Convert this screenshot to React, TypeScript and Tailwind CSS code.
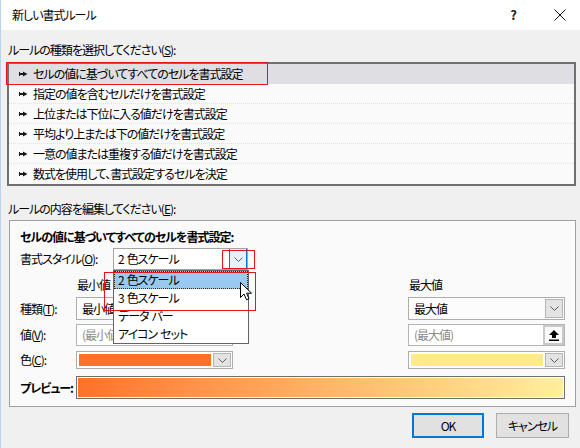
import React from "react"

const font = {
  fontFamily: '"Noto Sans CJK JP", "Noto Sans", sans-serif',
  fontFeatureSettings: '"palt"',
}

const rules = [
  "セルの値に基づいてすべてのセルを書式設定",
  "指定の値を含むセルだけを書式設定",
  "上位または下位に入る値だけを書式設定",
  "平均より上または下の値だけを書式設定",
  "一意の値または重複する値だけを書式設定",
  "数式を使用して、書式設定するセルを決定",
]

// the dialog font packs tight, but word gaps stay visible
const sp = "\u2004"

function Pointer() {
  return (
    <svg width="9" height="6" viewBox="0 0 9 6" className="shrink-0">
      <rect x="0" y="1" width="1" height="4" fill="#1a1a1a" />
      <rect x="0" y="2" width="4" height="2" fill="#1a1a1a" />
      <path d="M4 0.5 L8.5 3 L4 5.5 Z" fill="#1a1a1a" />
    </svg>
  )
}

function Chevron() {
  return (
    <svg width="9" height="5" viewBox="0 0 9 5">
      <polyline points="0.5,0.5 4.5,4.5 8.5,0.5" fill="none" stroke="#5a5a5a" strokeWidth="1" />
    </svg>
  )
}

function DropBtn() {
  return (
    <div className="my-[1px] mr-[1px] flex w-[18px] items-center justify-center border border-[#b5b5b5] bg-[#e3e3e3]">
      <Chevron />
    </div>
  )
}

function Cursor() {
  return (
    <svg width="13" height="19" viewBox="0 0 13 19">
      <path
        d="M0.5 0.5 L0.5 15.5 L4 12 L6.5 17.8 L9 16.8 L6.6 11.2 L11.5 11.2 Z"
        fill="#ffffff"
        stroke="#000000"
        strokeWidth="1"
      />
    </svg>
  )
}

function UploadIcon() {
  return (
    <svg width="10" height="11" viewBox="0 0 10 11">
      <path d="M5 0 L10 5 H7 V8 H3 V5 H0 Z" fill="#000" />
      <rect x="0" y="9.5" width="10" height="1.5" fill="#000" />
    </svg>
  )
}

export default function App() {
  return (
    <div
      style={font}
      className="relative flex h-[448px] w-[580px] flex-col overflow-hidden border-l border-[#b9d1ea] bg-[#f0f0f0] text-[12px] leading-[16px] tracking-[-1px] text-black"
    >
      {/* title bar */}
      <div className="flex h-[30px] shrink-0 items-center bg-white pl-[11px]">
        <span>新しい書式ルール</span>
        <span className="ml-auto mr-[38px] text-[13px] font-bold text-[#222]">?</span>
        <svg width="12" height="12" viewBox="0 0 12 12" className="mr-[14px]">
          <path d="M0.5 0.5 L11.5 11.5 M11.5 0.5 L0.5 11.5" stroke="#111" strokeWidth="1" />
        </svg>
      </div>

      <div className="flex flex-col pl-[6px] pr-[4px]">
        <div className="mt-[12px] pl-[1px]">
          ルールの種類を選択してください(<span className="underline">S</span>):
        </div>

        {/* rule type list */}
        <div className="relative mt-[4px] border-2 border-[#707070] bg-[#fafafa]">
          {rules.map((r, i) => (
            <div
              key={r}
              className={
                "flex h-[20px] items-center gap-[5px] pl-[10px] " +
                (i === 0 ? "bg-[#dedee3] " : "") +
                (i < rules.length - 1 ? "border-b border-dotted border-[#e2e2e2]" : "")
              }
            >
              <Pointer />
              <span>{r}</span>
            </div>
          ))}
          <div className="absolute left-[-3px] top-[-2px] h-[23px] w-[262px] border border-[#e8141b]" />
        </div>

        <div className="mt-[15px] pl-[1px]">
          ルールの内容を編集してください(<span className="underline">E</span>):
        </div>

        {/* rule description group */}
        <div className="ml-[2px] mt-[3px] flex flex-col border border-[#a0a0a0] bg-[#fafafa] pb-[7px] pl-[10px] pr-[9px] pt-[8px]">
          <div className="font-bold">セルの値に基づいてすべてのセルを書式設定:</div>

          <div className="mt-[3px] flex items-center">
            <div className="w-[93px]">
              書式スタイル(<span className="underline">O</span>):
            </div>
            <div className="relative flex h-[22px] w-[135px] border border-[#a5a5a5] bg-white">
              <span className="flex flex-1 items-center pl-[4px]">2{sp}色スケール</span>
              <div className="flex w-[18px] items-center justify-center border-x border-[#0078d7] bg-[#e5f1fb]">
                <Chevron />
              </div>

              {/* open dropdown */}
              <div className="absolute left-[-1px] top-[21px] z-10 flex w-[136px] flex-col border border-[#646464] bg-white">
                <div className="flex h-[18px] items-center border border-dotted border-[#3a2a1a] bg-[#99c9ef] pl-[3px]">
                  2{sp}色スケール
                </div>
                <div className="flex h-[18px] items-center pl-[4px]">3{sp}色スケール</div>
                <div className="flex h-[18px] items-center pl-[4px]">データ{sp}バー</div>
                <div className="flex h-[18px] items-center pl-[4px]">アイコン{sp}セット</div>
              </div>

              <div className="absolute left-[108px] top-[1px] z-20 h-[19px] w-[33px] border border-[#e8141b]" />
              <div className="absolute left-[-10px] top-[23px] z-20 h-[39px] w-[152px] border border-[#e8141b]" />
              <div className="absolute left-[126px] top-[33px] z-30">
                <Cursor />
              </div>
            </div>
          </div>

          {/* min / max grid */}
          <div className="mt-[7px] grid grid-cols-[56px_157px_175px_157px] items-center">
            <div />
            <div className="pl-[1px]">最小値</div>
            <div />
            <div className="pl-[1px]">最大値</div>

            <div className="mt-[4px]">
              種類(<span className="underline">T</span>):
            </div>
            <div className="mt-[4px] flex h-[23px] border border-[#adadad] bg-[#fcfcfc]">
              <span className="flex flex-1 items-center pl-[5px]">最小値</span>
              <DropBtn />
            </div>
            <div />
            <div className="mt-[4px] flex h-[23px] border border-[#adadad] bg-[#fcfcfc]">
              <span className="flex flex-1 items-center pl-[5px]">最大値</span>
              <DropBtn />
            </div>

            <div className="mt-[4px]">
              値(<span className="underline">V</span>):
            </div>
            <div className="mt-[4px] flex h-[22px] border border-[#b4b4b4] bg-white">
              <span className="flex flex-1 items-center pl-[5px] text-[#8a8a8a]">(最小値)</span>
            </div>
            <div />
            <div className="mt-[4px] flex h-[22px] border border-[#b4b4b4] bg-white">
              <span className="flex flex-1 items-center pl-[5px] text-[#8a8a8a]">(最大値)</span>
              <div className="flex w-[21px] bg-[#c9c9c9] p-[2px]">
                <div className="flex flex-1 items-center justify-center bg-[#fafafa]">
                  <UploadIcon />
                </div>
              </div>
            </div>

            <div className="mt-[5px]">
              色(<span className="underline">C</span>):
            </div>
            <div className="mt-[5px] flex h-[18px] border border-[#adadad] bg-white">
              <div className="m-[2px] flex-1 bg-[#ff7128]" />
              <DropBtn />
            </div>
            <div />
            <div className="mt-[5px] flex h-[18px] border border-[#adadad] bg-white">
              <div className="m-[2px] flex-1 bg-[#ffea8a]" />
              <DropBtn />
            </div>

            <div className="mt-[7px] whitespace-nowrap font-bold">プレビュー:</div>
            <div className="col-span-3 mt-[7px] flex h-[23px] border border-[#6e6e6e] bg-white p-[1px]">
              <div className="flex-1 bg-gradient-to-r from-[#ff7128] to-[#ffef9c]" />
            </div>
          </div>
        </div>

        {/* buttons */}
        <div className="mt-[6px] flex justify-end gap-[12px] pr-[7px]">
          <button className="flex h-[25px] w-[72px] items-center justify-center border-2 border-[#0078d7] bg-[#e1e1e1]">
            OK
          </button>
          <button className="flex h-[25px] w-[73px] items-center justify-center border border-[#adadad] bg-[#e1e1e1]">
            キャンセル
          </button>
        </div>
      </div>
    </div>
  )
}
